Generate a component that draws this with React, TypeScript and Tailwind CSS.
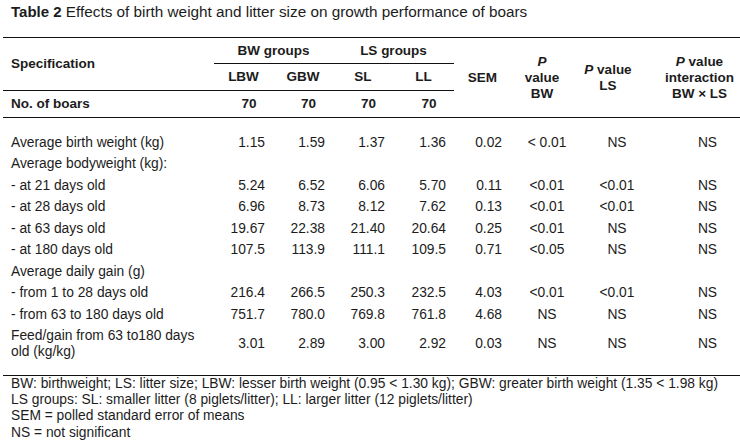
import React from 'react';

type Row = { label: React.ReactNode; v?: string[]; tall?: boolean };

const ROWS: Row[] = [
  { label: 'Average birth weight (kg)', v: ['1.15', '1.59', '1.37', '1.36', '0.02', '< 0.01', 'NS', 'NS'] },
  { label: 'Average bodyweight (kg):' },
  { label: '- at 21 days old', v: ['5.24', '6.52', '6.06', '5.70', '0.11', '<0.01', '<0.01', 'NS'] },
  { label: '- at 28 days old', v: ['6.96', '8.73', '8.12', '7.62', '0.13', '<0.01', '<0.01', 'NS'] },
  { label: '- at 63 days old', v: ['19.67', '22.38', '21.40', '20.64', '0.25', '<0.01', 'NS', 'NS'] },
  { label: '- at 180 days old', v: ['107.5', '113.9', '111.1', '109.5', '0.71', '<0.05', 'NS', 'NS'] },
  { label: 'Average daily gain (g)' },
  { label: '- from 1 to 28 days old', v: ['216.4', '266.5', '250.3', '232.5', '4.03', '<0.01', '<0.01', 'NS'] },
  { label: '- from 63 to 180 days old', v: ['751.7', '780.0', '769.8', '761.8', '4.68', 'NS', 'NS', 'NS'] },
  {
    label: (
      <>
        Feed/gain from 63 to180 days
        <br />
        old (kg/kg)
      </>
    ),
    v: ['3.01', '2.89', '3.00', '2.92', '0.03', 'NS', 'NS', 'NS'],
    tall: true,
  },
];

// per-column alignment of the value cells
const VALUE_CLS = [
  'text-right pr-[8px]',
  'text-right pr-[8px]',
  'text-right pr-[8px]',
  'text-right pr-[8px]',
  'text-right pr-[9px]',
  'text-center pl-[10px]',
  'text-center pl-[18px]',
  'text-center pl-[16px]',
];

const GRID = 'grid grid-cols-[211px_59px_60px_60px_61px_57px_62px_70px_113px]';

const Cell: React.FC<{ className?: string; children?: React.ReactNode }> = ({ className = '', children }) => (
  <div className={`flex items-center justify-center text-center ${className}`}>{children}</div>
);

export default function App() {
  return (
    <div className="w-[740px] h-[441px] overflow-hidden bg-white text-[#1c1c1c] font-['Liberation_Sans',Arial,sans-serif] text-[13.8px]">
      {/* title */}
      <div className="pl-[11px] pt-[3px] h-[37px] text-[15.3px] leading-[18px] whitespace-nowrap">
        <span className="font-bold text-[15px]">Table 2</span> Effects of birth weight and litter size on growth performance of boars
      </div>

      <div className="ml-[3px] w-[753px]">
        {/* header */}
        <div className={`${GRID} grid-rows-[26px_27px_26px] border-t border-b border-[#111] font-bold text-[13.5px] leading-[16px]`}>
          <Cell className="row-span-2 col-start-1 row-start-1 justify-start pl-[8px] border-b border-[#111]">Specification</Cell>
          <Cell className="col-span-2 col-start-2 row-start-1 border-b border-[#111]">BW groups</Cell>
          <Cell className="col-span-2 col-start-4 row-start-1 border-b border-[#111]">LS groups</Cell>
          <Cell className="row-span-3 col-start-6 row-start-1">SEM</Cell>
          <Cell className="row-span-3 col-start-7 row-start-1">
            <span>
              <i>P</i>
              <br />
              value
              <br />
              BW
            </span>
          </Cell>
          <Cell className="row-span-3 col-start-8 row-start-1">
            <span>
              <i>P</i> value
              <br />
              LS
            </span>
          </Cell>
          <Cell className="row-span-3 col-start-9 row-start-1">
            <span>
              <i>P</i> value
              <br />
              interaction
              <br />
              BW × LS
            </span>
          </Cell>
          <Cell className="col-start-2 row-start-2 border-b border-[#111]">LBW</Cell>
          <Cell className="col-start-3 row-start-2 border-b border-[#111]">GBW</Cell>
          <Cell className="col-start-4 row-start-2 border-b border-[#111]">SL</Cell>
          <Cell className="col-start-5 row-start-2 border-b border-[#111]">LL</Cell>
          <Cell className="col-start-1 row-start-3 justify-start pl-[8px]">No. of boars</Cell>
          <Cell className="col-start-2 row-start-3 pl-[11px]">70</Cell>
          <Cell className="col-start-3 row-start-3 pl-[11px]">70</Cell>
          <Cell className="col-start-4 row-start-3 pl-[11px]">70</Cell>
          <Cell className="col-start-5 row-start-3 pl-[11px]">70</Cell>
        </div>

        {/* body */}
        <div className="pt-[14px] pb-[13px] border-b border-[#111] leading-[16px]">
          {ROWS.map((r, i) => (
            <div key={i} className={`${GRID} items-center ${r.tall ? 'h-[36px]' : 'h-[21.5px]'}`}>
              <div className="pl-[8px] whitespace-nowrap">{r.label}</div>
              {r.v?.map((val, j) => (
                <div key={j} className={`whitespace-nowrap ${VALUE_CLS[j]}`}>
                  {val}
                </div>
              ))}
            </div>
          ))}
        </div>
      </div>

      {/* footnotes */}
      <div className="pl-[11px] leading-[16.4px] whitespace-nowrap">
        <div>BW: birthweight; LS: litter size; LBW: lesser birth weight (0.95 &lt; 1.30 kg); GBW: greater birth weight (1.35 &lt; 1.98 kg)</div>
        <div>LS groups: SL: smaller litter (8 piglets/litter); LL: larger litter (12 piglets/litter)</div>
        <div>SEM = polled standard error of means</div>
        <div>NS = not significant</div>
      </div>
    </div>
  );
}
